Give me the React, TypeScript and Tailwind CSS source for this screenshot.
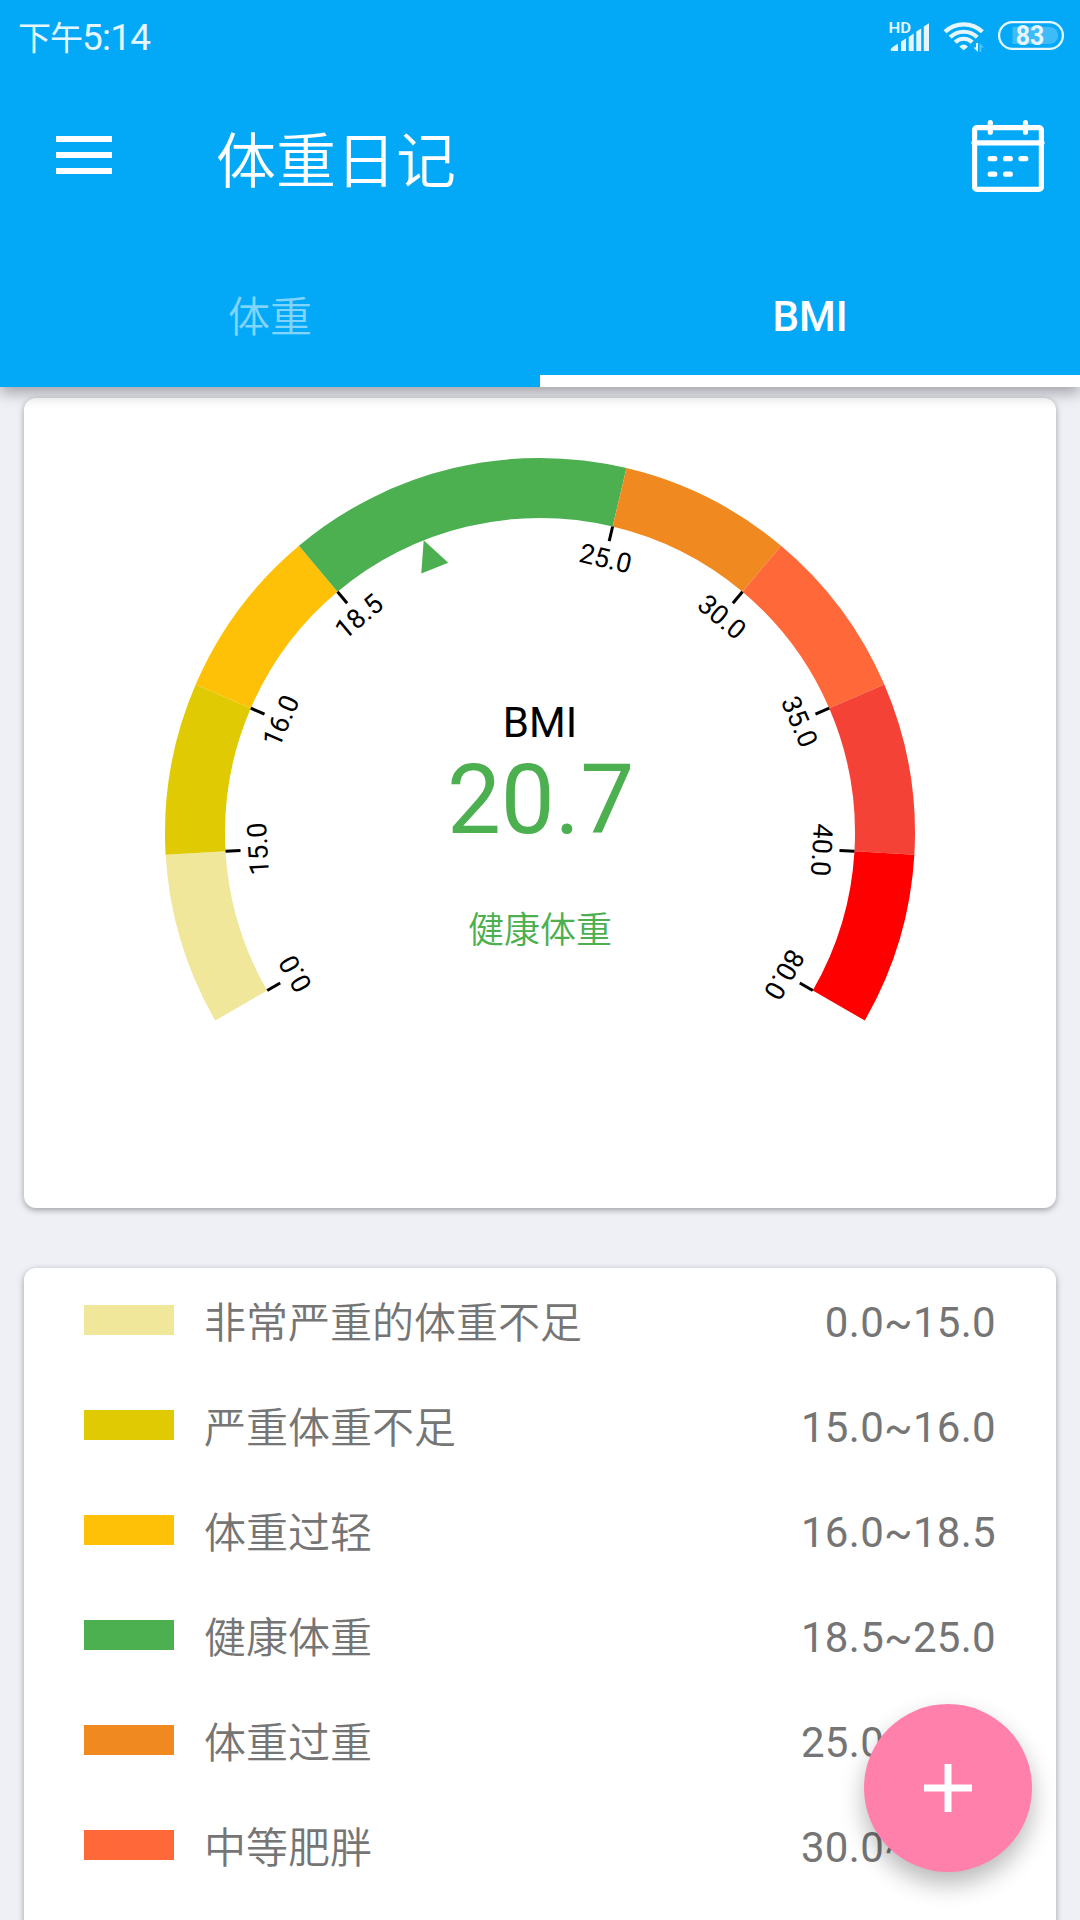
const CX = 516;
const CY = 435;
const UNIT = 240 / 9;

const segments = [
  { from: 0, to: 1, color: '#f0e79b' },
  { from: 1, to: 2, color: '#dfca03' },
  { from: 2, to: 3, color: '#ffc107' },
  { from: 3, to: 5, color: '#4caf50' },
  { from: 5, to: 6, color: '#f08a20' },
  { from: 6, to: 7, color: '#ff6839' },
  { from: 7, to: 8, color: '#f44336' },
  { from: 8, to: 9, color: '#ff0000' },
];

const ticks = [
  { at: 0, label: '0.0' },
  { at: 1, label: '15.0' },
  { at: 2, label: '16.0' },
  { at: 3, label: '18.5' },
  { at: 5, label: '25.0' },
  { at: 6, label: '30.0' },
  { at: 7, label: '35.0' },
  { at: 8, label: '40.0' },
  { at: 9, label: '80.0' },
];

const rows = [
  { swatch: 'bg-[#f0e79b]', name: '非常严重的体重不足', range: '0.0~15.0' },
  { swatch: 'bg-[#dfca03]', name: '严重体重不足', range: '15.0~16.0' },
  { swatch: 'bg-[#ffc107]', name: '体重过轻', range: '16.0~18.5' },
  { swatch: 'bg-[#4caf50]', name: '健康体重', range: '18.5~25.0' },
  { swatch: 'bg-[#f08a20]', name: '体重过重', range: '25.0~30.0' },
  { swatch: 'bg-[#ff6839]', name: '中等肥胖', range: '30.0~35.0' },
];

function point(r: number, deg: number) {
  const a = (deg * Math.PI) / 180;
  return `${(CX + r * Math.sin(a)).toFixed(2)} ${(CY - r * Math.cos(a)).toFixed(2)}`;
}

function arc(from: number, to: number) {
  const a = from * UNIT - 120;
  const b = to * UNIT - 120;
  return `M${point(375, a)} A375 375 0 0 1 ${point(375, b)} L${point(315, b)} A315 315 0 0 0 ${point(315, a)}Z`;
}

function Gauge() {
  return (
    <svg width="1032" height="810" viewBox="0 0 1032 810" className="block font-['Roboto','Noto_Sans_CJK_SC',sans-serif]">
      {segments.map((s) => (
        <path key={s.from} d={arc(s.from, s.to)} fill={s.color} />
      ))}
      {ticks.map((t) => (
        <g key={t.at} transform={`translate(${CX} ${CY}) rotate(${t.at * UNIT - 120})`}>
          <path d="M0 -315V-300" stroke="#000" strokeWidth="3" />
          <text x=".5" y="-273" fontSize="27" textAnchor="middle">
            {t.label}
          </text>
        </g>
      ))}
      <path d="M0 -315L-14.5 -285H14.5Z" fill="#4caf50" transform={`translate(${CX} ${CY}) rotate(-21.67)`} />
      <text x={CX} y="339" fontSize="42" textAnchor="middle">
        BMI
      </text>
      <text x={CX + 0.5} y="435" fontSize="96" fill="#4caf50" textAnchor="middle">
        20.7
      </text>
      <text x={CX} y="545" fontSize="36" fontWeight="350" fill="#4caf50" textAnchor="middle">
        健康体重
      </text>
    </svg>
  );
}

function SignalIcon() {
  return (
    <svg width="44" height="34" viewBox="886 17 44 34" fill="#fff" className="overflow-visible font-['Roboto',sans-serif]">
      <text x="888.6" y="31" fontSize="15" fontWeight="600" textLength="22.5" lengthAdjust="spacingAndGlyphs">
        HD
      </text>
      <path d="M890.6 47.5Q890.6 46 897 42.2Q898 41.6 898 43V49H892Q890.6 49 890.6 47.5ZM901 39.5L906 36.5V49H901ZM908.7 35L913.7 31.5V49H908.7ZM916.3 29.5L921.2 26.5V49H916.3ZM923.8 24.5L929 21.3V49H923.8Z" />
    </svg>
  );
}

function WifiIcon() {
  return (
    <svg width="42" height="34" viewBox="943 19 42 34" fill="none" stroke="#fff" strokeWidth="4.2">
      <path d="M945 31.8A27 27 0 0 1 982.4 31.8" />
      <path d="M950.2 37.2A19.5 19.5 0 0 1 977.2 37.2" />
      <path d="M955.2 42.2A12.2 12.2 0 0 1 972.2 42.2" />
      <path d="M963.7 50.2L959.4 46.8Q963.7 42.2 968 46.8Z" fill="#fff" stroke="none" />
      <path d="M978 43V52L973.5 47.5H976V43Z" fill="#fff" stroke="none" />
      <path d="M979.5 52V43L984 47.5H981.3V52Z" fill="#fff" fillOpacity=".35" stroke="none" />
    </svg>
  );
}

function BatteryIcon() {
  return (
    <svg width="66" height="30" viewBox="998 21 66 30" fill="none" className="font-['Roboto',sans-serif]">
      <rect x="999.1" y="22.1" width="63.8" height="26.8" rx="13.4" stroke="#fff" strokeWidth="2.3" />
      <path d="M1012.5 26.8H1049.5A8.6 8.6 0 0 1 1049.5 44H1012.5Z" fill="#fff" fillOpacity=".26" />
      <text x="1030" y="45.2" fontSize="27" fontWeight="700" textAnchor="middle" textLength="28.5" lengthAdjust="spacingAndGlyphs" fill="#fff">
        83
      </text>
    </svg>
  );
}

function CalendarIcon() {
  return (
    <svg width="74" height="74" viewBox="971 119 74 74" fill="none" stroke="#fff" strokeWidth="5.2" strokeLinecap="round">
      <rect x="974.6" y="127.7" width="66.8" height="61.6" rx="2.4" />
      <path d="M974 142.8H1042" />
      <path d="M990.3 122.6V132.2M1025.5 122.6V132.2" />
      <path d="M990.2 158.7H994.8M1005.6 158.7H1010.3M1021 158.7H1025.8M990.2 174.2H994.8M1005.6 174.2H1010.3" />
    </svg>
  );
}

export default function App() {
  return (
    <div className="relative flex h-[1920px] w-[1080px] flex-col overflow-hidden bg-[#eff0f6] font-['Roboto','Noto_Sans_CJK_SC',sans-serif]">
      <header className="relative z-10 flex h-[387px] shrink-0 flex-col bg-[#03a9f7] text-white shadow-[0_6px_14px_rgba(0,0,0,0.32)]">
        <div className="flex h-[72px] shrink-0 items-center justify-between pr-4 pl-[18px] opacity-90">
          <div className="flex items-baseline pt-0.5 leading-none">
            <span className="text-[33px] tracking-[-1px]">下午</span>
            <span className="text-[37px] tracking-[-0.8px]">5:14</span>
          </div>
          <div className="flex items-center gap-[13px]">
            <SignalIcon />
            <WifiIcon />
            <BatteryIcon />
          </div>
        </div>
        <div className="flex h-[168px] shrink-0 items-center pr-[35px] pl-14">
          <div className="flex w-14 flex-col gap-2.5 pb-0.5">
            <span className="h-1.5 bg-white" />
            <span className="h-1.5 bg-white" />
            <span className="h-1.5 bg-white" />
          </div>
          <h1 className="ml-[104px] flex-1 pt-3.5 text-[60px] leading-none font-[350]">体重日记</h1>
          <CalendarIcon />
        </div>
        <nav className="grid flex-1 grid-cols-2 text-[42px] leading-none">
          <div className="flex items-center justify-center pt-2 font-[350] text-white/50">体重</div>
          <div className="flex items-center justify-center border-b-12 border-white pt-[18px] font-medium">BMI</div>
        </nav>
      </header>
      <main className="flex flex-col gap-[60px] px-6 pt-[11px]">
        <section className="h-[810px] rounded-xl bg-white shadow-[0_2px_6px_rgba(0,0,0,0.35)]">
          <Gauge />
        </section>
        <section className="h-[735px] rounded-xl bg-white pr-[60px] pl-[60px] shadow-[0_2px_6px_rgba(0,0,0,0.35)]">
          {rows.map((r) => (
            <div key={r.name} className="flex h-[105px] items-center text-[42px] leading-none text-[#757575]">
              <span className={`mb-px h-[30px] w-[90px] ${r.swatch}`} />
              <span className="ml-[30px] flex-1 pt-[7px] font-[350]">{r.name}</span>
              <span className="pt-[5px] tracking-[0.3px]">{r.range}</span>
            </div>
          ))}
        </section>
      </main>
      <button className="absolute right-12 bottom-12 z-20 flex size-[168px] items-center justify-center rounded-full bg-[#ff80ab] shadow-[0_12px_24px_rgba(0,0,0,0.28)]">
        <svg width="48" height="48" viewBox="0 0 48 48" stroke="#fff" strokeWidth="7">
          <path d="M0 24H48M24 0V48" />
        </svg>
      </button>
    </div>
  );
}
